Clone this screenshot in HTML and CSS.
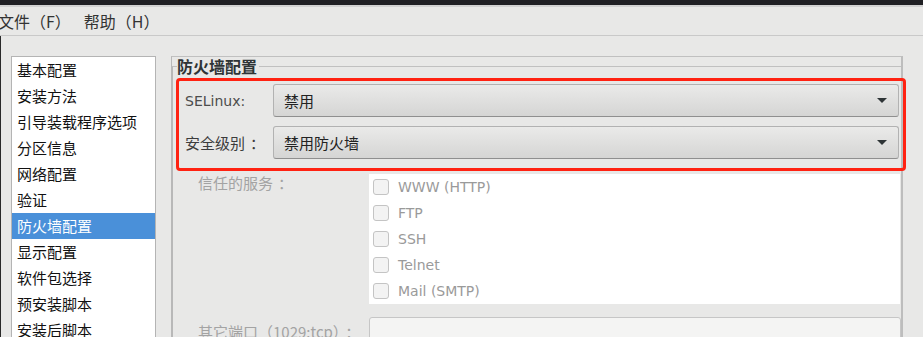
FILE: index.html
```html
<!DOCTYPE html>
<html lang="zh-CN">

<head>
    <meta charset="UTF-8">
    <meta name="viewport" content="width=device-width, initial-scale=1.0">
    <title>Kickstart 配置程序</title>
    <link rel="stylesheet" href="styles.css">
</head>

<body>
    <div class="titlebar"></div>
    <div class="menubar">
        <span class="menu-item">文件（F）</span>
        <span class="menu-item">帮助（H）</span>
    </div>

    <div class="main">
        <ul class="sidebar">
            <li>基本配置</li>
            <li>安装方法</li>
            <li>引导装载程序选项</li>
            <li>分区信息</li>
            <li>网络配置</li>
            <li>验证</li>
            <li class="selected">防火墙配置</li>
            <li>显示配置</li>
            <li>软件包选择</li>
            <li>预安装脚本</li>
            <li>安装后脚本</li>
        </ul>

        <div class="panel">
            <fieldset class="frame">
                <legend>防火墙配置</legend>

                <div class="highlight">
                    <div class="row">
                        <span class="label">SELinux:</span>
                        <div class="combo"><span>禁用</span><span class="arrow"></span></div>
                    </div>
                    <div class="row">
                        <span class="label cjk">安全级别<span class="colon">：</span></span>
                        <div class="combo"><span>禁用防火墙</span><span class="arrow"></span></div>
                    </div>
                </div>

                <div class="services">
                    <span class="label-disabled">信任的服务<span class="colon">：</span></span>
                    <ul class="service-list">
                        <li><span class="check"></span>WWW (HTTP)</li>
                        <li><span class="check"></span>FTP</li>
                        <li><span class="check"></span>SSH</li>
                        <li><span class="check"></span>Telnet</li>
                        <li><span class="check"></span>Mail (SMTP)</li>
                    </ul>
                </div>

                <div class="ports">
                    <span class="label-disabled">其它端口（1029:tcp）<span class="colon">：</span></span>
                    <div class="entry"></div>
                </div>
            </fieldset>
        </div>
    </div>
</body>
</html>
```

FILE: styles.css
```css
body {
    font-family: "DejaVu Sans", "Noto Sans CJK SC", sans-serif;
    background-color: #e8e8e7;
    margin: 0;
    padding: 0;
    width: 923px;
    height: 337px;
    overflow: hidden;
    color: #2e3436;
}

.titlebar {
    height: 5px;
    background-color: #202024;
    border-bottom: 2px solid #d2d2d2;
}

.menubar {
    height: 28px;
    display: flex;
    align-items: center;
    border-bottom: 1px solid #c9c9c9;
    font-family: "Noto Sans CJK SC", sans-serif;
    font-size: 16px;
    color: #333;
}

.menu-item {
    margin-left: -2px;
    margin-right: 15px;
}

.main {
    display: flex;
    align-items: flex-start;
    border-left: 1px solid #2a2a2a;
    padding-top: 20px;
    height: 301px;
}

.sidebar {
    list-style: none;
    margin: 0 0 0 10px;
    padding: 0;
    width: 143px;
    height: 300px;
    background-color: white;
    border: 1px solid #b4b4b4;
    font-family: "Noto Sans CJK SC", sans-serif;
    font-size: 15px;
    color: #111;
}

.sidebar li {
    height: 26px;
    line-height: 26px;
    padding-left: 5px;
}

.sidebar li.selected {
    background-color: #4a90d9;
    color: white;
}

.panel {
    margin-left: 15px;
    width: 729px;
    height: 300px;
    border-top: 1px solid #c0c0c0;
    border-left: 1px solid #b8b8b8;
    border-right: 2px solid #bdbdbd;
}

.frame {
    margin: 0;
    padding: 0 0 0 3px;
    border: none;
    border-top: 1px solid #c0c0c0;
    border-left: 1px solid #b8b8b8;
    min-width: 0;
}

.frame legend {
    padding: 0 2px 0 0;
    margin-left: 1px;
    font-family: "Noto Sans CJK SC", sans-serif;
    font-weight: bold;
    font-size: 16px;
    line-height: 18px;
    color: #2e3436;
}

.highlight {
    box-sizing: border-box;
    width: 730px;
    margin-top: 3px;
    padding: 3px 4px 9px 6px;
    border: 3px solid #ff2212;
    border-radius: 4px;
    display: flex;
    flex-direction: column;
    gap: 9px;
}

.row {
    display: flex;
    align-items: center;
}

.label {
    width: 88px;
    font-size: 14px;
    color: #4c4c4c;
}

.label.cjk {
    font-family: "Noto Sans CJK SC", sans-serif;
    font-size: 15px;
    color: #3c3c3c;
}

/* full-width colon sits centred in its cell in the original dialog */
.colon {
    margin-left: 5px;
}

.combo {
    flex: 1;
    height: 31px;
    display: flex;
    align-items: center;
    justify-content: space-between;
    padding: 0 11px 0 10px;
    background: linear-gradient(#eaeae9, #d5d5d4);
    border: 1px solid #b2b2b2;
    border-bottom-color: #8f8f8f;
    border-radius: 3px;
    font-family: "Noto Sans CJK SC", sans-serif;
    font-size: 15px;
    color: #222;
}

.arrow {
    width: 0;
    height: 0;
    border-left: 5px solid transparent;
    border-right: 5px solid transparent;
    border-top: 5px solid #2e3436;
}

.services {
    display: flex;
    margin-top: 3px;
}

.label-disabled {
    box-sizing: border-box;
    width: 193px;
    padding-left: 22px;
    font-family: "Noto Sans CJK SC", sans-serif;
    font-size: 15px;
    line-height: 18px;
    color: #a3a3a3;
}

.service-list {
    list-style: none;
    margin: 0;
    padding: 0;
    width: 531px;
    background-color: white;
}

.service-list li {
    height: 26px;
    display: flex;
    align-items: center;
    gap: 9px;
    padding-left: 4px;
    font-size: 14px;
    color: #9a9a9a;
}

.check {
    box-sizing: border-box;
    width: 16px;
    height: 16px;
    border: 1px solid #c4c4c4;
    border-radius: 3px;
    background-color: #f3f3f3;
}

.ports {
    display: flex;
    margin-top: 13px;
}

.ports .label-disabled {
    padding-top: 6px;
}

.entry {
    width: 530px;
    height: 34px;
    background-color: #f4f4f3;
    border: 1px solid #c6c6c6;
    border-radius: 3px;
}
```
